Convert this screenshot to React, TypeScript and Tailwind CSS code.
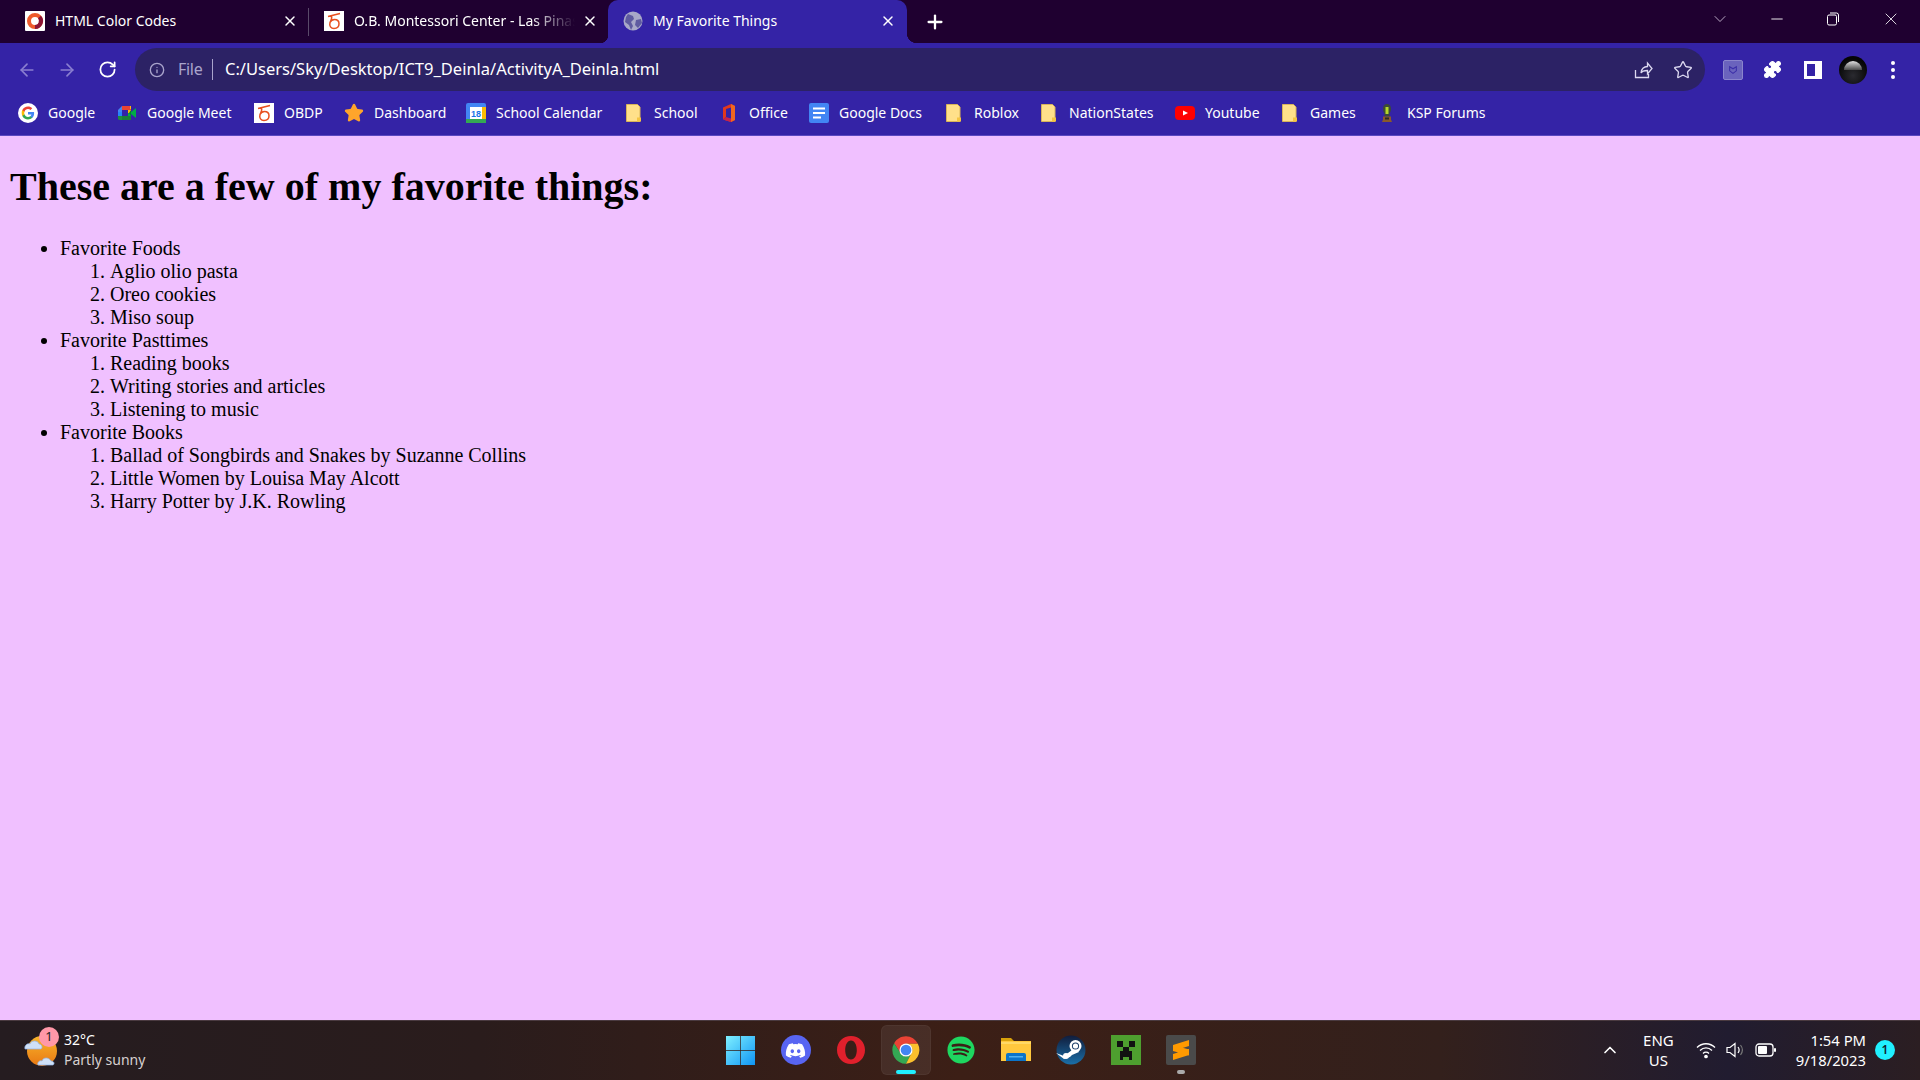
import React from "react";
import { ArrowLeft, ArrowRight, RotateCw, Info, Star, Plus, X, Minus, ChevronDown, ChevronUp, Puzzle } from "lucide-react";
import { FaSpotify, FaDiscord } from "react-icons/fa";

const UI = "font-['Noto_Sans','Open_Sans',sans-serif]";

function GoogleIcon() {
  return (
    <svg viewBox="0 0 48 48" className="w-5 h-5 shrink-0">
      <circle cx="24" cy="24" r="24" fill="#fff" />
      <g transform="translate(8 8) scale(0.667)">
        <path fill="#4285F4" d="M46 24.5c0-1.6-.1-3.1-.4-4.5H24v9h12.4c-.5 2.9-2.1 5.300-4.500 6.900v5.700h7.300C43.500 37.600 46 31.600 46 24.500z" />
        <path fill="#34A853" d="M24 47c6.100 0 11.300-2 15.100-5.500l-7.300-5.700c-2 1.400-4.700 2.200-7.800 2.200-6 0-11-4-12.800-9.500H3.600v5.900C7.400 41.900 15.100 47 24 47z" />
        <path fill="#FBBC05" d="M11.200 28.500c-.5-1.400-.7-2.900-.7-4.500s.3-3.100.7-4.500v-5.900H3.600C2.100 16.700 1.200 20.200 1.200 24s.9 7.300 2.400 10.400l7.600-5.900z" />
        <path fill="#EA4335" d="M24 10c3.400 0 6.400 1.200 8.800 3.400l6.500-6.500C35.300 3.200 30.100 1 24 1 15.100 1 7.400 6.100 3.600 13.600l7.600 5.900C13 14 18 10 24 10z" />
      </g>
    </svg>
  );
}

function MeetIcon() {
  return (
    <svg viewBox="0 0 20 20" className="w-5 h-5 shrink-0">
      <path fill="#ea4335" d="M5 3h9v4H5z" />
      <path fill="#fbbc04" d="M14 3h-1v3h1z" />
      <path fill="#4285f4" d="M1 7l4-4v6H1z" />
      <path fill="#2684fc" d="M1 9h4v4H1z" />
      <path fill="#188038" d="M5 13h9v4H5z" />
      <path fill="#1e8e3e" d="M1 13h4v4H2.500C1.700 17 1 16.300 1 15.500z" />
      <path fill="#fbbc04" d="M11 7h3v3h-3z" />
      <path fill="#00ac47" d="M11 10h3v3h-3zM14 9l5-4v10l-5-4z" />
      <path fill="#00832d" d="M14 7v6l-2-3z" />
    </svg>
  );
}

function MontessoriIcon() {
  return (
    <svg viewBox="0 0 20 20" className="w-5 h-5 shrink-0">
      <rect width="20" height="20" fill="#fff" />
      <path d="M4 5.500L16 2.500M7 4.500C9 7 7 9 6 11.500C5 15 7 17.500 10 17.500C13 17.500 15 15.500 15 12.800C15 10 13 8.500 10.500 8.500C8.500 8.500 7 9.500 6 11.500" fill="none" stroke="#e8501f" strokeWidth="1.500" />
    </svg>
  );
}

function FolderBookmark() {
  return (
    <svg viewBox="0 0 20 20" className="w-5 h-5 shrink-0">
      <path d="M2.500 1.500h11l2.500 2.500v14.500H2.500z" fill="#ffe08a" stroke="#d9b45a" />
      <path d="M13 18.500v-4h4v4z" fill="#f5c542" />
    </svg>
  );
}

function CalendarIcon() {
  return (
    <svg viewBox="0 0 20 20" className="w-5 h-5 shrink-0">
      <rect x="0" y="0" width="20" height="20" rx="2" fill="#4285f4" />
      <rect x="15" y="4" width="5" height="12" fill="#fbbc04" />
      <rect x="0" y="16" width="20" height="4" fill="#34a853" />
      <rect x="4" y="4" width="12" height="12" fill="#fff" />
      <text x="10" y="13.500" textAnchor="middle" fontSize="9" fontWeight="700" fill="#1a73e8" fontFamily="Liberation Sans, sans-serif">18</text>
    </svg>
  );
}

function OfficeIcon() {
  return (
    <svg viewBox="0 0 20 20" className="w-5 h-5 shrink-0">
      <path d="M4 4.500L12 1l4 2v14l-4 2-8-2.500 8 1V4.500L7 6v8l-3 2.500z" fill="#e2381c" />
      <path d="M4 16.500L7 14l5 1.500V19z" fill="#c7224e" />
      <path d="M12 1l4 2v14l-4 2z" fill="#f0671f" />
    </svg>
  );
}

function DocsIcon() {
  return (
    <svg viewBox="0 0 20 20" className="w-5 h-5 shrink-0">
      <rect width="20" height="20" rx="2" fill="#4285f4" />
      <path d="M4 4.500h12v2H4zM4 9h12v2H4zM4 13.500h8v2H4z" fill="#fff" />
    </svg>
  );
}

function YoutubeIcon() {
  return (
    <svg viewBox="0 0 20 20" className="w-5 h-5 shrink-0">
      <rect x="0" y="3" width="20" height="14" rx="4" fill="#f00" />
      <path d="M8 7.500l5 2.500-5 2.500z" fill="#fff" />
    </svg>
  );
}

function KspIcon() {
  return (
    <svg viewBox="0 0 20 20" className="w-5 h-5 shrink-0">
      <path d="M10 1C7 1 6 3.500 6 6c0 2.500 1 3.500 1.500 4.500v3h5v-3C13 9.500 14 8.500 14 6c0-2.500-1-5-4-5z" fill="#3c4a3a" />
      <rect x="8.500" y="4" width="3" height="7" fill="#b5d82a" />
      <path d="M6 13.500h8v3l1 2.500H5l1-2.500z" fill="#8a5a2a" />
      <rect x="8" y="14.500" width="4" height="2" fill="#2a2a2a" />
    </svg>
  );
}

function Bookmark({ icon, label, width }: { icon: React.ReactNode; label: string; width: string }) {
  return (
    <div className={`flex items-center gap-[10px] ${width}`}>
      {icon}
      <span className="whitespace-nowrap pb-[2px]">{label}</span>
    </div>
  );
}

function TabClose() {
  return <X className="w-4 h-4 text-white" strokeWidth={2.2} />;
}

function Tab({ icon, title, active, fade, className }: { icon: React.ReactNode; title: string; active?: boolean; fade?: boolean; className: string }) {
  return (
    <div className={`relative flex items-center h-[43px] pb-[1px] ${className} ${active ? "bg-[#3423a6] rounded-t-[10px] pr-[11px]" : "pr-[10px]"}`}>
      {active && <div className="absolute bottom-0 left-[-8px] w-[8px] h-[8px] bg-[radial-gradient(circle_at_0_0,transparent_8px,#3423a6_8.500px)]" />}
      {active && <div className="absolute bottom-0 right-[-10px] w-[10px] h-[10px] bg-[radial-gradient(circle_at_100%_0,transparent_10px,#3423a6_10.500px)]" />}
      {icon}
      <span className={`ml-[10px] flex-1 overflow-hidden whitespace-nowrap pb-[2px] ${fade ? "[mask-image:linear-gradient(to_right,black_80%,transparent)]" : ""}`}>{title}</span>
      <div className={`shrink-0 ${fade ? "ml-[7px]" : "ml-1"}`}><TabClose /></div>
    </div>
  );
}

function ListSection({ title, items }: { title: string; items: string[] }) {
  return (
    <li>
      {title}
      <ol className="list-decimal pl-[50px]">
        {items.map((t) => (
          <li key={t}>{t}</li>
        ))}
      </ol>
    </li>
  );
}

function WeatherIcon() {
  return (
    <div className="relative w-[36px] h-[36px] shrink-0">
      <svg viewBox="0 0 36 36" className="w-full h-full">
        <defs>
          <linearGradient id="sun" x1="0" y1="0" x2="0" y2="1">
            <stop offset="0" stopColor="#f9b52b" />
            <stop offset="1" stopColor="#e87813" />
          </linearGradient>
        </defs>
        <circle cx="18" cy="19" r="15" fill="url(#sun)" />
        <path d="M1 17c-1-4 3-6 5-5 1-4 8-4 9 0 3 0 4 4 2 5z" fill="#cfe0f7" stroke="#8fb3e6" strokeWidth="0.7" />
        <path d="M14 33c-1-3 2-5 4-4 1-4 7-4 9 0 3 0 4 3 2 4z" fill="#cfe0f7" stroke="#8fb3e6" strokeWidth="0.7" />
      </svg>
      <div className="absolute top-[-5px] right-[1px] w-[20px] h-[20px] rounded-full bg-[#ff98a8] text-[#222] text-[13px] flex items-center justify-center">1</div>
    </div>
  );
}

function WinIcon() {
  return (
    <svg viewBox="0 0 30 30" className="w-[30px] h-[30px]">
      <defs>
        <linearGradient id="win" x1="0" y1="0" x2="1" y2="1">
          <stop offset="0" stopColor="#7ff0ff" />
          <stop offset="1" stopColor="#0f95f5" />
        </linearGradient>
      </defs>
      <path d="M0 1h14.300v14H0zM15 1H29v14H15zM0 15.800h14.300V30H0zM15 15.800H29V30H15z" fill="url(#win)" />
    </svg>
  );
}

function DiscordIcon() {
  return (
    <div className="w-[30px] h-[30px] rounded-full bg-[#5865f2] flex items-center justify-center">
      <FaDiscord className="text-white w-[21px] h-[21px]" />
    </div>
  );
}

function OperaIcon() {
  return (
    <svg viewBox="0 0 30 30" className="w-[30px] h-[30px]">
      <path fillRule="evenodd" d="M15 1C7 1 1 7 1 15s6 14 14 14 14-6 14-14S23 1 15 1zm0 4.500c3.800 0 5.800 4.500 5.800 9.500s-2 9.500-5.800 9.500-5.800-4.500-5.800-9.500 2-9.500 5.800-9.500z" fill="#e0202c" />
    </svg>
  );
}

function ChromeIcon() {
  return (
    <svg viewBox="0 0 48 48" className="w-[30px] h-[30px]">
      <path fill="#ea4335" d="M24 2C15.800 2 8.700 6.500 5 13.100l10.300 15.900A10 10 0 0 1 24 14h19C39.300 6.900 32.200 2 24 2z" />
      <path fill="#34a853" d="M5 13.100A22 22 0 0 0 24 46l8.700-17a10 10 0 0 1-17.400 0z" />
      <path fill="#fbc02d" d="M43 14H24a10 10 0 0 1 8.700 15L24 46A22 22 0 0 0 43 14z" />
      <circle cx="24" cy="24" r="10.500" fill="#fff" />
      <circle cx="24" cy="24" r="8.500" fill="#4285f4" />
    </svg>
  );
}

function FolderIcon() {
  return (
    <svg viewBox="0 0 30 30" className="w-[30px] h-[30px]">
      <path d="M0 3h10l3 3h17v5H0z" fill="#d9a20b" />
      <path d="M0 6h30v20H0z" fill="#ffc83d" />
      <path d="M0 7h30v2H0z" fill="#ffd966" />
      <path d="M5 26v-6a2 2 0 0 1 2-2h16a2 2 0 0 1 2 2v6z" fill="#0b74c9" />
      <path d="M8 21h14v1.500H8z" fill="#4fb0f0" />
    </svg>
  );
}

function SteamIcon() {
  return (
    <svg viewBox="0 0 30 30" className="w-[30px] h-[30px]">
      <defs>
        <linearGradient id="steam" x1="0" y1="0" x2="0" y2="1">
          <stop offset="0" stopColor="#111d3c" />
          <stop offset="1" stopColor="#1a6fa8" />
        </linearGradient>
      </defs>
      <circle cx="15" cy="15" r="14.500" fill="url(#steam)" />
      <path d="M0 18l8 3 8-6 4-4 3 6-7 3-2 2-6 2z" fill="#fff" />
      <circle cx="19.500" cy="11" r="6" fill="#fff" />
      <circle cx="19.500" cy="11" r="3.600" fill="#1a3c66" />
      <circle cx="19.500" cy="11" r="2.600" fill="#fff" />
      <circle cx="10" cy="21" r="3" fill="#fff" />
    </svg>
  );
}

function CreeperIcon() {
  return (
    <svg viewBox="0 0 30 30" className="w-[30px] h-[30px]">
      <rect width="30" height="30" fill="#4e9f2f" />
      <path d="M6 6h6v6H6zM18 6h6v6h-6zM12 12h6v4h3v9h-3v-3h-6v3H9v-9h3z" fill="#111" />
    </svg>
  );
}

function SublimeIcon() {
  return (
    <svg viewBox="0 0 30 30" className="w-[30px] h-[30px]">
      <rect width="30" height="30" rx="2" fill="#4a4a4a" />
      <path d="M23 5v6L7 16v-6zM7 19l16-5v6L7 25zM7 10l16 4.500v6L7 16z" fill="#ff9a00" />
    </svg>
  );
}

function TaskIcon({ children, active, running }: { children: React.ReactNode; active?: boolean; running?: boolean }) {
  return (
    <div className={`relative w-[55px] h-[50px] flex items-center justify-center`}>
      {active && <div className="absolute left-[2.500px] top-0 w-[50px] h-[50px] rounded-md bg-[#ffffff12] border border-[#ffffff0a]" />}
      <div className="relative">{children}</div>
      {active && <div className="absolute left-[17.500px] bottom-[1px] w-[20px] h-[4px] rounded-full bg-[#20f0ff]" />}
      {running && <div className="absolute left-[24px] bottom-[1px] w-[8px] h-[4px] rounded-full bg-[#aaa]" />}
    </div>
  );
}

export default function App() {
  return (
    <div className={`w-[1920px] h-[1080px] flex flex-col overflow-hidden bg-[#f0c0ff] ${UI}`}>
      {/* Tab strip */}
      <div className="h-[43px] shrink-0 bg-[#1f0030] flex items-center text-white text-[14px]">
        <Tab className="w-[300px] ml-[8px] pl-[17px]" icon={
          <svg viewBox="0 0 20 20" className="w-5 h-5 shrink-0">
            <rect width="20" height="20" rx="1" fill="#fff" />
            <circle cx="10" cy="10" r="6" fill="none" stroke="#ee5a2c" strokeWidth="4" />
            <path d="M14.500 6A6 6 0 0 1 10 16" fill="none" stroke="#8a1436" strokeWidth="4" />
          </svg>
        } title="HTML Color Codes" />
        <div className="w-px h-[28px] bg-[#5a4a6a]" />
        <Tab className="w-[299px] pl-[15px]" fade icon={<MontessoriIcon />} title="O.B. Montessori Center - Las Pinas" />
        <Tab className="w-[299px] pl-[15px]" active icon={
          <svg viewBox="0 0 20 20" className="w-5 h-5 shrink-0">
            <circle cx="10" cy="10" r="9.500" fill="#a8a8c8" />
            <path d="M5 3l5 2 1 3-3 3 2 4-2 4-2-5-4-3 1-5zM13 9l5-1 1 4-4 5-3-3z" fill="#5e5aa0" />
          </svg>
        } title="My Favorite Things" />
        <Plus className="w-[22px] h-[22px] ml-[17px] text-white" strokeWidth={2.5} />
        <div className="flex-1" />
        <ChevronDown className="w-[20px] h-[20px] text-[#d5c8de] mr-[38px] -translate-y-[3px]" strokeWidth={1} />
        <Minus className="w-[18px] h-[18px] text-white mr-[40px] -translate-y-[3px]" strokeWidth={1.2} />
        <svg viewBox="0 0 14 14" className="w-[14px] h-[14px] mr-[41px] -translate-y-[3px]" fill="none" stroke="#fff" strokeWidth="1">
          <rect x="1.500" y="3" width="9" height="10" rx="1.500" />
          <path d="M4 1h6.500A2 2 0 0 1 12.500 3v7" />
        </svg>
        <X className="w-[20px] h-[20px] text-white mr-[19px] -translate-y-[3px]" strokeWidth={1} />
      </div>

      {/* Toolbar */}
      <div className="h-[48px] shrink-0 bg-[#3423a6] flex items-start pt-[5px]">
        <div className="h-[43px] w-[135px] flex items-center text-white shrink-0">
          <ArrowLeft className="w-[20px] h-[20px] ml-[17px] text-[#8a7fd0]" strokeWidth={2} />
          <ArrowRight className="w-[20px] h-[20px] ml-[20px] text-[#8a7fd0]" strokeWidth={2} />
          <RotateCw className="w-[19px] h-[19px] ml-[21px] text-white" strokeWidth={2.2} />
        </div>
        <div className="w-[1570px] h-[43px] rounded-full bg-[#2c2265] flex items-center shrink-0">
          <Info className="w-[16px] h-[16px] ml-[14px] text-[#a9a4cc]" strokeWidth={2} />
          <span className="ml-[13px] pb-[1px] text-[16px] text-[#a9a4cc] w-[29px] tracking-[-0.3px]">File</span>
          <div className="ml-[5px] w-[1px] h-[21px] bg-[#a9a4cc]" />
          <span className="ml-[12px] pb-[1px] text-[16.5px] text-white whitespace-nowrap">C:/Users/Sky/Desktop/ICT9_Deinla/ActivityA_Deinla.html</span>
          <div className="flex-1" />
          <svg viewBox="0 0 20 20" className="w-[20px] h-[20px] text-[#dcd8f0]" fill="none" stroke="currentColor" strokeWidth="1.300">
            <path d="M2.500 10v7.500h13V14" />
            <path d="M8 13c0-4 3-6.500 6.500-6.500V3l4.500 5.500-4.500 5.500V10.500C11.500 10.500 9 11 8 13z" />
          </svg>
          <Star className="w-[20px] h-[20px] ml-[20px] mr-[12px] text-[#dcd8f0]" strokeWidth={1.6} />
        </div>
        <div className="h-[43px] flex items-center flex-1">
          <div className="ml-[18px] w-[20px] h-[20px] rounded-[2px] bg-[#6a63bd] border border-[#8a85cc] flex items-center justify-center">
            <svg viewBox="0 0 12 12" className="w-[10px] h-[10px]" fill="none" stroke="#3b2fa8" strokeWidth="1.300"><path d="M2 2v5l4 3 4-3V2L6 4.500z" /></svg>
          </div>
          <Puzzle className="ml-[20px] w-[19px] h-[19px] text-white fill-white" strokeWidth={1.5} />
          <div className="ml-[22px] w-[18px] h-[18px] bg-white flex items-center justify-start pl-[3px]">
            <div className="w-[8px] h-[12px] bg-[#3423a6]" />
          </div>
          <div className="ml-[17px] w-[28px] h-[28px] rounded-full bg-[radial-gradient(circle_at_50%_70%,#2a2a30,#050505_70%)] flex items-start justify-center overflow-hidden">
            <div className="mt-[5px] w-[18px] h-[9px] rounded-t-full bg-[linear-gradient(#e0e0e0,#4a4a4a)]" />
          </div>
          <div className="ml-[24px] flex flex-col gap-[3px]">
            <div className="w-[4px] h-[4px] rounded-full bg-white" />
            <div className="w-[4px] h-[4px] rounded-full bg-white" />
            <div className="w-[4px] h-[4px] rounded-full bg-white" />
          </div>
        </div>
      </div>

      {/* Bookmarks */}
      <div className="h-[45px] shrink-0 bg-[#3423a6] border-b border-[#5a48c0] flex items-center pl-[18px] text-[14px] text-white">
        <Bookmark width="w-[99px]" icon={<GoogleIcon />} label="Google" />
        <Bookmark width="w-[137px]" icon={<MeetIcon />} label="Google Meet" />
        <Bookmark width="w-[90px]" icon={<MontessoriIcon />} label="OBDP" />
        <Bookmark width="w-[122px]" icon={<Star className="w-5 h-5 shrink-0 text-[#ffa52b] fill-[#ffa52b]" />} label="Dashboard" />
        <Bookmark width="w-[158px]" icon={<CalendarIcon />} label="School Calendar" />
        <Bookmark width="w-[95px]" icon={<FolderBookmark />} label="School" />
        <Bookmark width="w-[90px]" icon={<OfficeIcon />} label="Office" />
        <Bookmark width="w-[135px]" icon={<DocsIcon />} label="Google Docs" />
        <Bookmark width="w-[95px]" icon={<FolderBookmark />} label="Roblox" />
        <Bookmark width="w-[136px]" icon={<FolderBookmark />} label="NationStates" />
        <Bookmark width="w-[105px]" icon={<YoutubeIcon />} label="Youtube" />
        <Bookmark width="w-[97px]" icon={<FolderBookmark />} label="Games" />
        <Bookmark width="w-[110px]" icon={<KspIcon />} label="KSP Forums" />
      </div>

      {/* Page */}
      <main className="flex-1 bg-[#f0c0ff] px-[10px] font-['Liberation_Serif',serif] text-[20px] leading-[23px] text-black overflow-hidden">
        <h1 className="text-[40px] leading-[46px] font-bold mt-[28px] mb-[27px]">These are a few of my favorite things:</h1>
        <ul className="list-disc pl-[50px]">
          <ListSection title="Favorite Foods" items={["Aglio olio pasta", "Oreo cookies", "Miso soup"]} />
          <ListSection title="Favorite Pasttimes" items={["Reading books", "Writing stories and articles", "Listening to music"]} />
          <ListSection title="Favorite Books" items={["Ballad of Songbirds and Snakes by Suzanne Collins", "Little Women by Louisa May Alcott", "Harry Potter by J.K. Rowling"]} />
        </ul>
      </main>

      {/* Taskbar */}
      <div className="h-[60px] shrink-0 border-t border-[#4a3a40] pb-[1px] bg-[linear-gradient(90deg,#251c20_0%,#2a1c1c_25%,#3c1f16_50%,#33201c_75%,#211c30_90%,#2b1e22_100%)] flex items-center text-white text-[14px]">
        <div className="w-[713px] flex items-center pl-[24px] shrink-0">
          <WeatherIcon />
          <div className="ml-[4px] leading-[20px] pb-[1px]">
            <div>32°C</div>
            <div className="text-[#d6d0d0]">Partly sunny</div>
          </div>
        </div>
        <div className="flex items-center">
          <TaskIcon><WinIcon /></TaskIcon>
          <TaskIcon><DiscordIcon /></TaskIcon>
          <TaskIcon><OperaIcon /></TaskIcon>
          <TaskIcon active><ChromeIcon /></TaskIcon>
          <TaskIcon><FaSpotify className="w-[28px] h-[28px] text-[#1ed760]" /></TaskIcon>
          <TaskIcon><FolderIcon /></TaskIcon>
          <TaskIcon><SteamIcon /></TaskIcon>
          <TaskIcon><CreeperIcon /></TaskIcon>
          <TaskIcon running><SublimeIcon /></TaskIcon>
        </div>
        <div className="flex-1 flex items-center justify-end text-[15px]">
          <ChevronUp className="w-[20px] h-[20px] text-white mr-[23px]" strokeWidth={2} />
          <div className="flex flex-col items-center leading-[20px] mr-[22px] pb-[1px]">
            <span>ENG</span>
            <span>US</span>
          </div>
          <svg viewBox="0 0 20 20" className="w-[20px] h-[20px] mr-[9px]" fill="none" stroke="#fff" strokeWidth="1.300">
            <path d="M1 7.500c5-5 13-5 18 0M4 10.500c3.500-3.500 8.500-3.500 12 0M7 13.500c1.700-1.700 4.300-1.700 6 0" />
            <circle cx="10" cy="16.500" r="1.200" fill="#fff" />
          </svg>
          <svg viewBox="0 0 20 20" className="w-[20px] h-[20px] mr-[10px]" fill="none" stroke="#fff" strokeWidth="1.200">
            <path d="M2 7.500h3l5-4v13l-5-4H2z" />
            <path d="M13 7c1.300 1.700 1.300 4.300 0 6" />
            <path d="M15.500 5c2.300 3 2.300 7 0 10" stroke="#777" />
          </svg>
          <svg viewBox="0 0 22 14" className="w-[22px] h-[14px] mr-[19px]">
            <rect x="1" y="1" width="17" height="12" rx="3" fill="none" stroke="#fff" strokeWidth="1.300" />
            <rect x="3" y="3" width="9" height="8" rx="1" fill="#fff" />
            <rect x="19" y="5" width="2" height="4" rx="1" fill="#fff" />
          </svg>
          <div className="flex flex-col items-end leading-[20px] mr-[9px] pb-[1px] text-[14.8px]">
            <span>1:54 PM</span>
            <span>9/18/2023</span>
          </div>
          <div className="w-[20px] h-[20px] rounded-full bg-[#20f0ff] text-[#102030] text-[12px] font-semibold flex items-center justify-center mr-[25px]">1</div>
        </div>
      </div>
    </div>
  );
}
